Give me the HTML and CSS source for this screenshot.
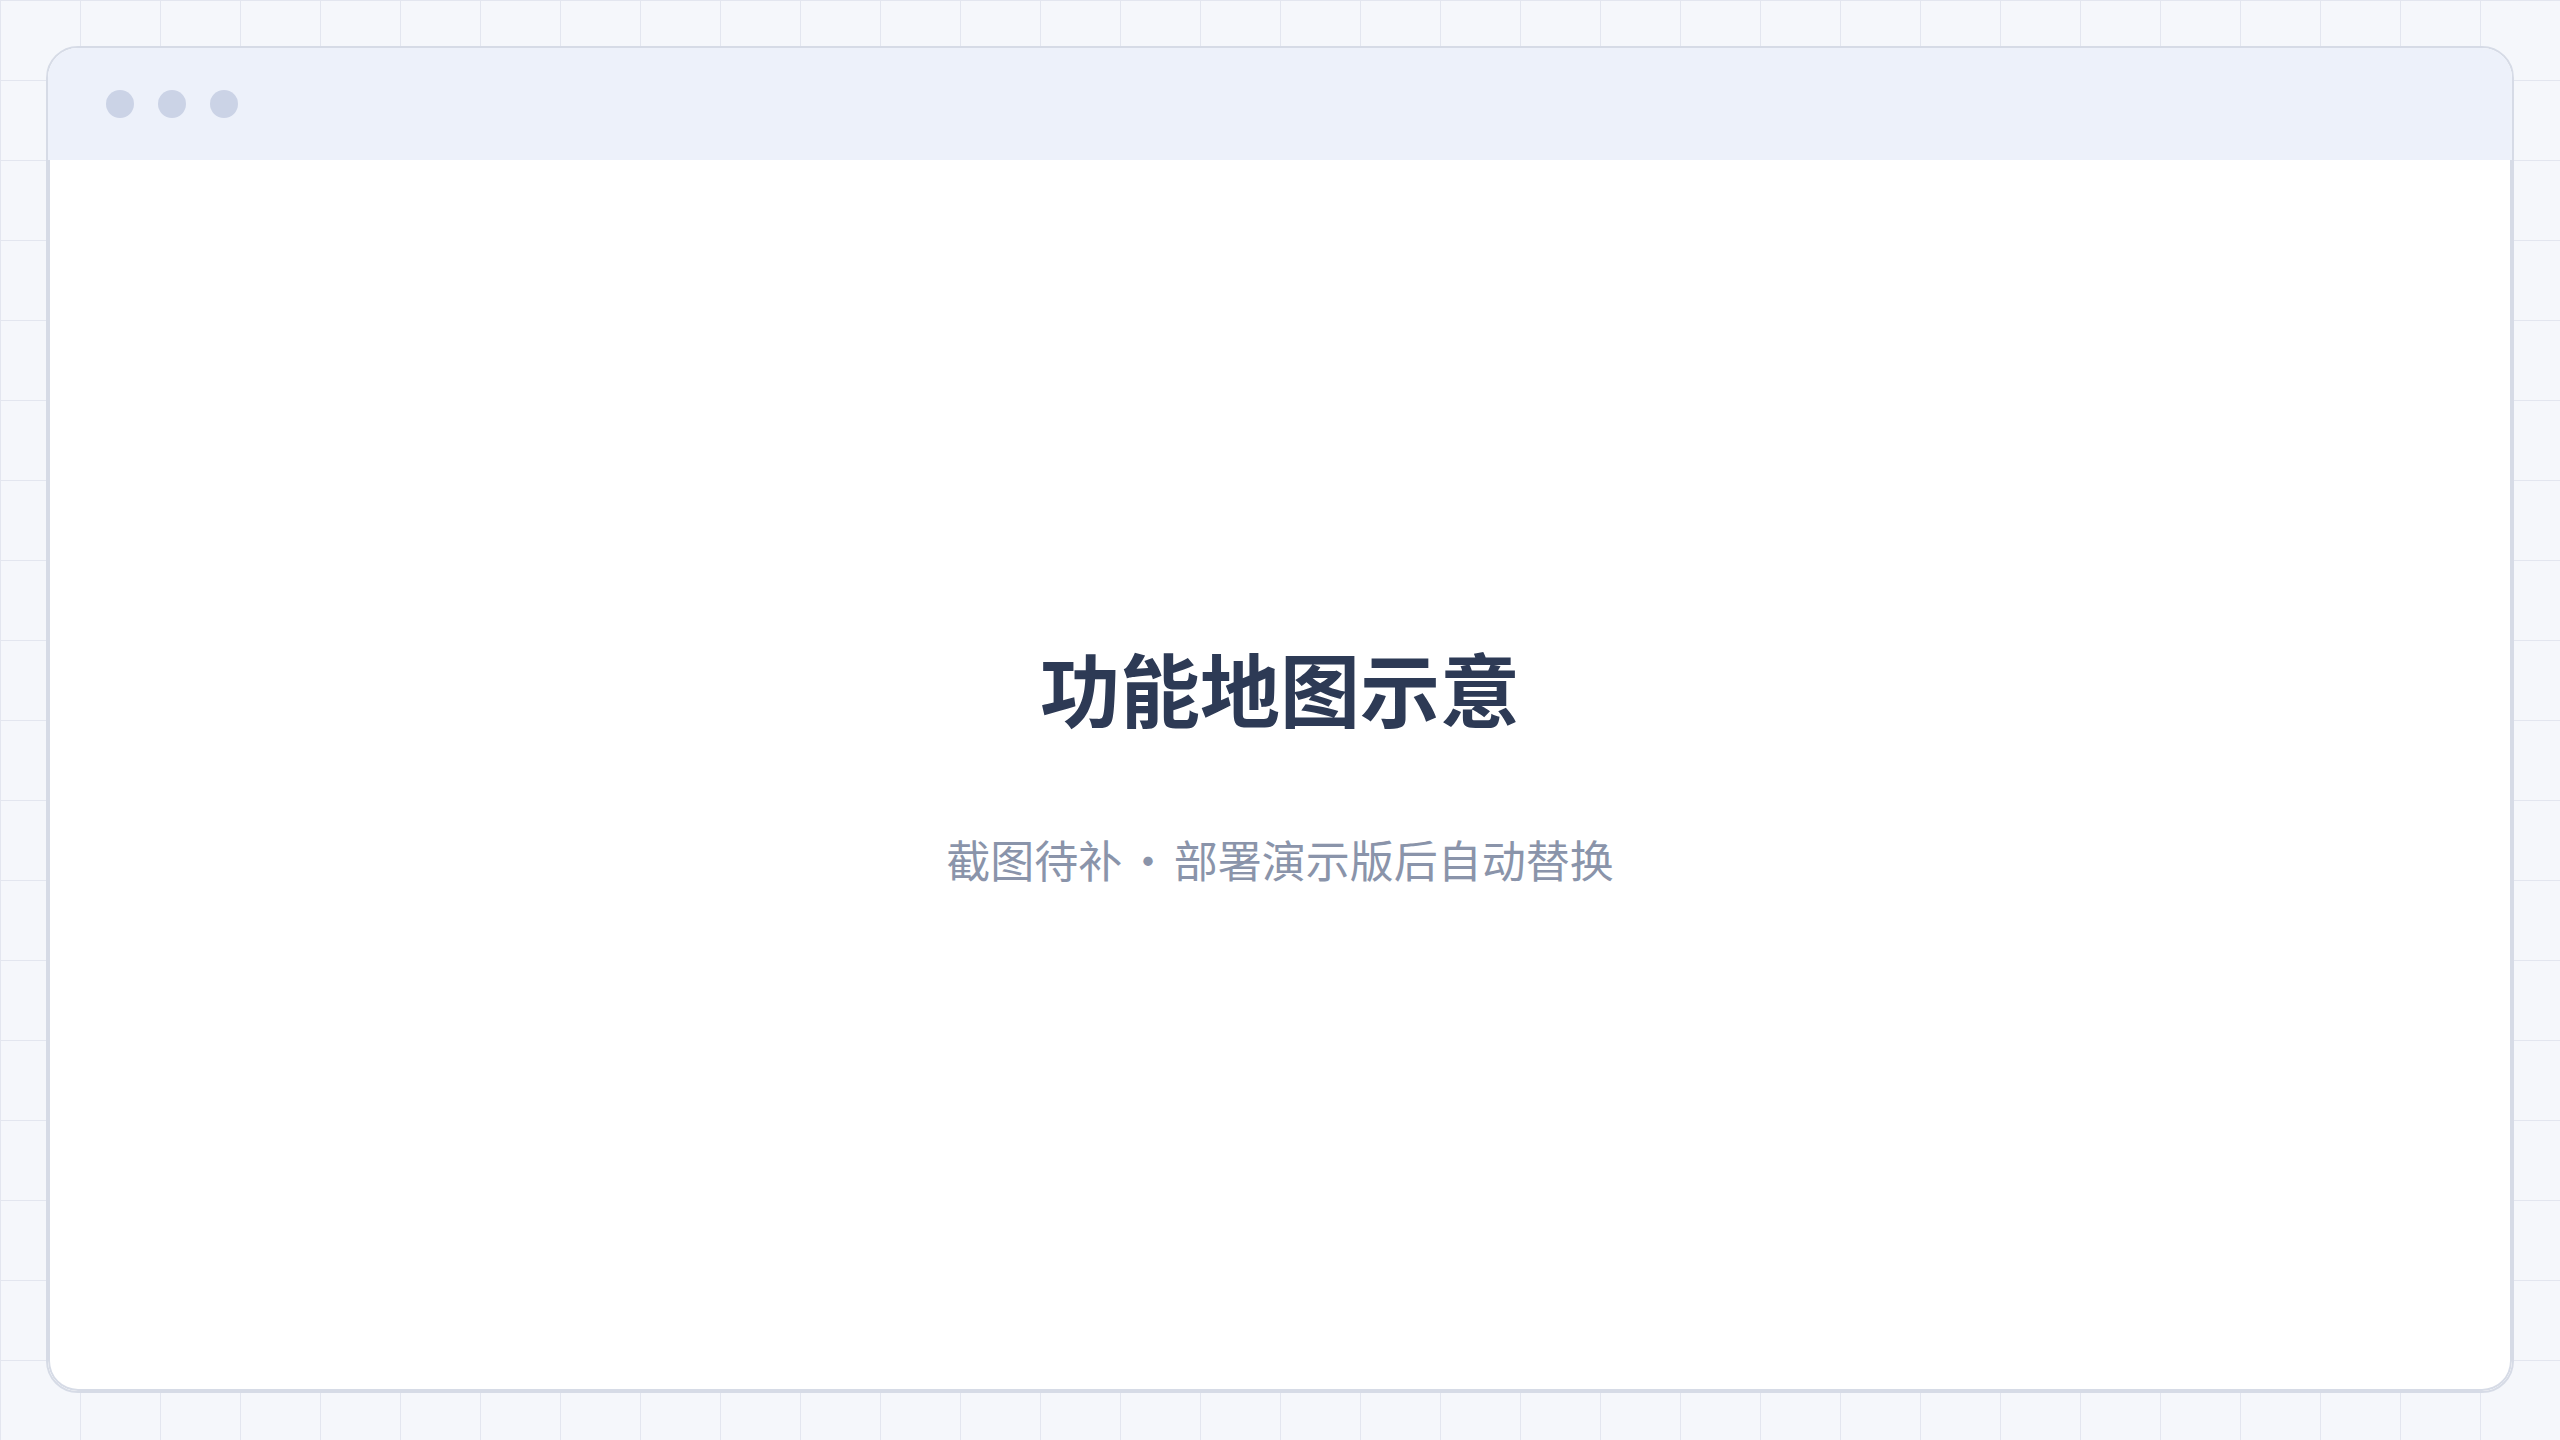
FILE: index.html
```html
<!DOCTYPE html>
<html lang="zh-CN">
<head>
<meta charset="utf-8">
<title>功能地图示意</title>
<link rel="stylesheet" href="styles.css">
</head>
<body>
<div class="page">
  <div class="window">
    <div class="titlebar">
      <span class="dot"></span>
      <span class="dot"></span>
      <span class="dot"></span>
    </div>
    <div class="screen">
      <h1 class="headline">功能地图示意</h1>
      <p class="caption">截图待补 · 部署演示版后自动替换</p>
    </div>
  </div>
</div>
</body>
</html>
```
FILE: styles.css
```css
html, body {
  margin: 0;
  padding: 0;
  height: 100%;
}
body {
  background-color: #f5f7fb;
  background-image:
    linear-gradient(to right, #e3e6ef 1px, transparent 1px),
    linear-gradient(to bottom, #e3e6ef 1px, transparent 1px);
  background-size: 80px 80px;
  font-family: "Noto Sans CJK SC", "Noto Sans", sans-serif;
}
.page {
  box-sizing: border-box;
  height: 100vh;
  padding: 46px 46px 47px 46px;
  display: flex;
}
.window {
  flex: 1;
  display: flex;
  flex-direction: column;
  border: 2px solid #d6dbe6;
  border-radius: 32px;
  overflow: hidden;
  background: #ffffff;
}
.titlebar {
  height: 112px;
  flex: none;
  background: #edf1fa;
  display: flex;
  align-items: center;
  gap: 24px;
  padding-left: 58px;
}
.dot {
  width: 28px;
  height: 28px;
  border-radius: 50%;
  background: #cbd3e6;
}
.screen {
  flex: 1;
  display: flex;
  flex-direction: column;
  align-items: center;
  justify-content: center;
  padding-bottom: 27px;
  border: 2px solid #d6dbe6;
  border-top: none;
  border-radius: 0 0 30px 30px;
  background: #ffffff;
}
.headline {
  margin: 0;
  font-size: 80px;
  font-weight: 700;
  line-height: 96px;
  color: #2d3a55;
}
.caption {
  margin: 99px 0 0 0;
  font-size: 44px;
  line-height: 52px;
  font-weight: 400;
  word-spacing: -6px;
  color: #8a94aa;
}
```
